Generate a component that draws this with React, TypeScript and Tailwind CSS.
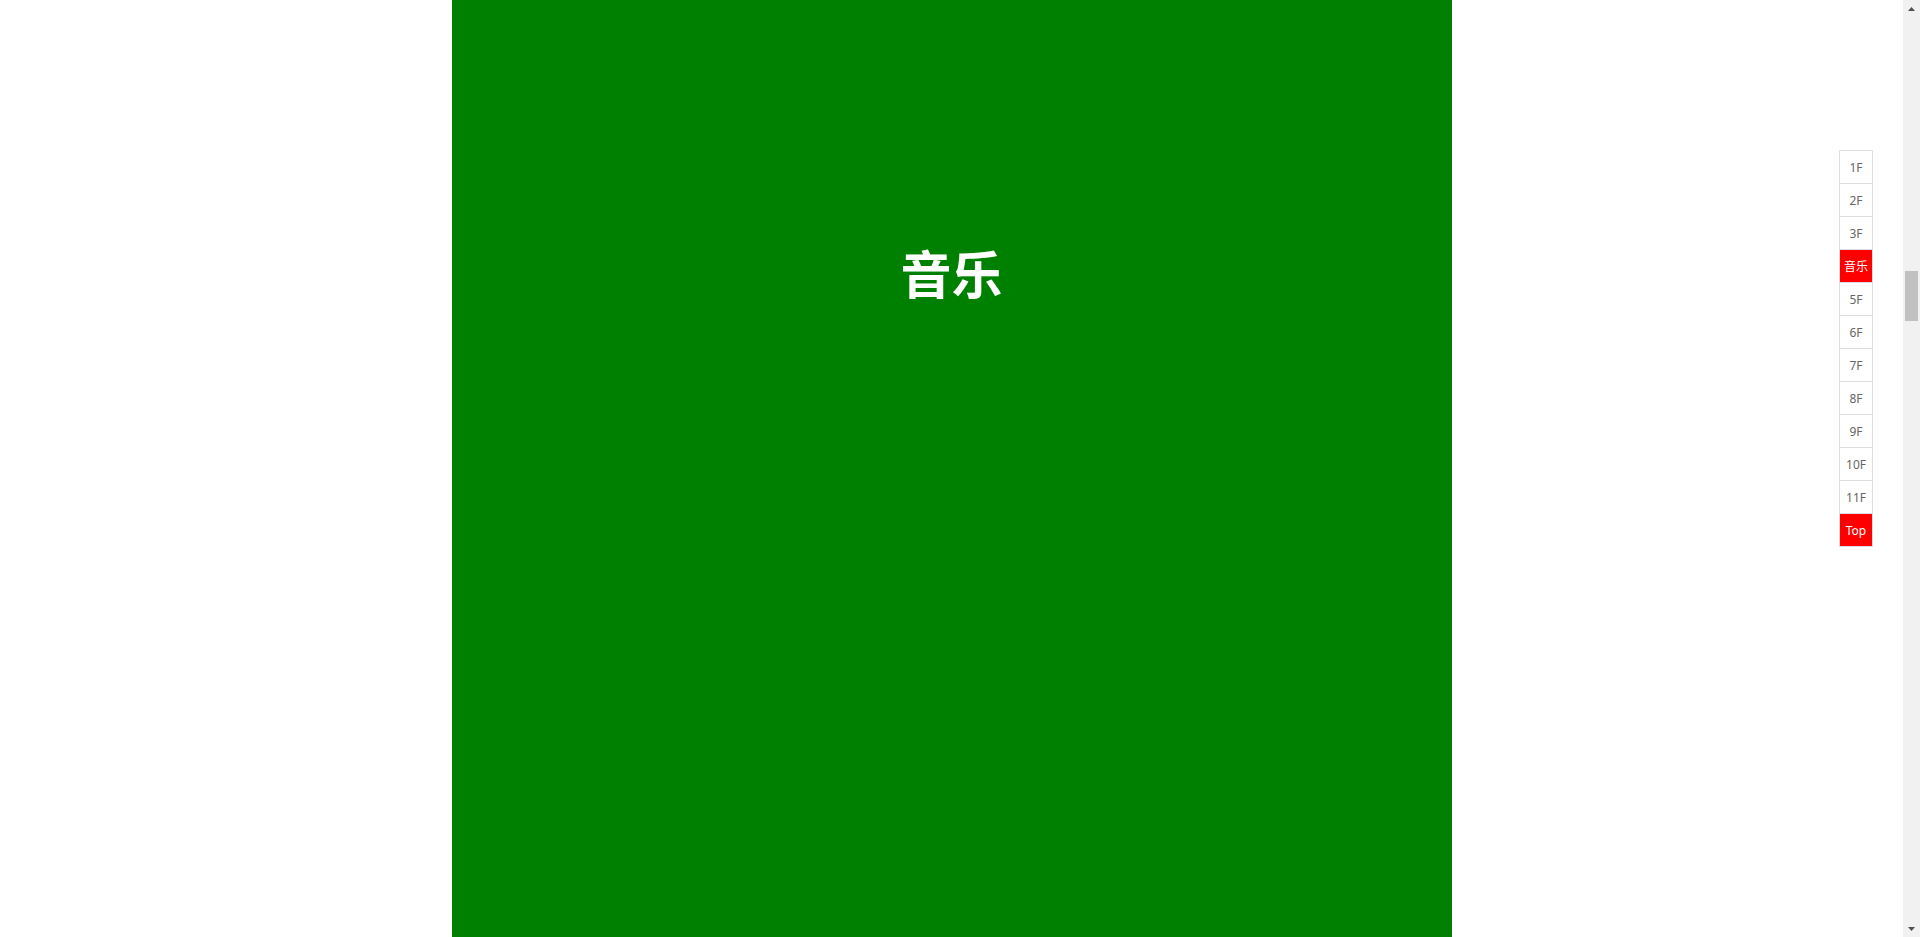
const navItems = ["1F", "2F", "3F", "音乐", "5F", "6F", "7F", "8F", "9F", "10F", "11F", "Top"]

const ACTIVE = "音乐"

function ScrollArrow({ up }: { up?: boolean }) {
  return (
    <div className="h-[17px] flex items-center justify-center">
      <svg width="7" height="4" viewBox="0 0 7 4">
        <polygon points={up ? "3.5,0 7,4 0,4" : "0,0 7,0 3.5,4"} fill="#505050" />
      </svg>
    </div>
  )
}

export default function App() {
  return (
    <div className="flex h-screen overflow-hidden bg-white font-['Noto_Sans','Noto_Sans_CJK_SC',sans-serif]">
      <main className="relative flex-1 flex justify-center">
        {/* FLOOR */}
        <section className="w-[1000px] bg-[#008000] pt-[244px]">
          <h2 className="text-center text-white text-[51px] leading-[56px] font-bold font-['Noto_Sans_CJK_SC',sans-serif]">
            音乐
          </h2>
        </section>

        {/* FLOOR NAV */}
        <ul className="absolute right-[30px] top-[150px] w-[34px] border border-b-0 border-[#ddd] bg-white text-[12px]">
          {navItems.map((item) => (
            <li
              key={item}
              className={
                item === ACTIVE || item === "Top"
                  ? "h-[33px] pt-[2px] border-b border-[#ddd] bg-[#ff0000] text-white flex items-center justify-center"
                  : "h-[33px] pt-[2px] border-b border-[#ddd] text-[#666] flex items-center justify-center"
              }
            >
              {item}
            </li>
          ))}
        </ul>
      </main>

      {/* SCROLLBAR */}
      <div className="w-[17px] bg-[#f1f1f1] flex flex-col">
        <ScrollArrow up />
        <div className="mt-[254px] mx-[2px] h-[50px] bg-[#c1c1c1]" />
        <div className="flex-1" />
        <ScrollArrow />
      </div>
    </div>
  )
}
